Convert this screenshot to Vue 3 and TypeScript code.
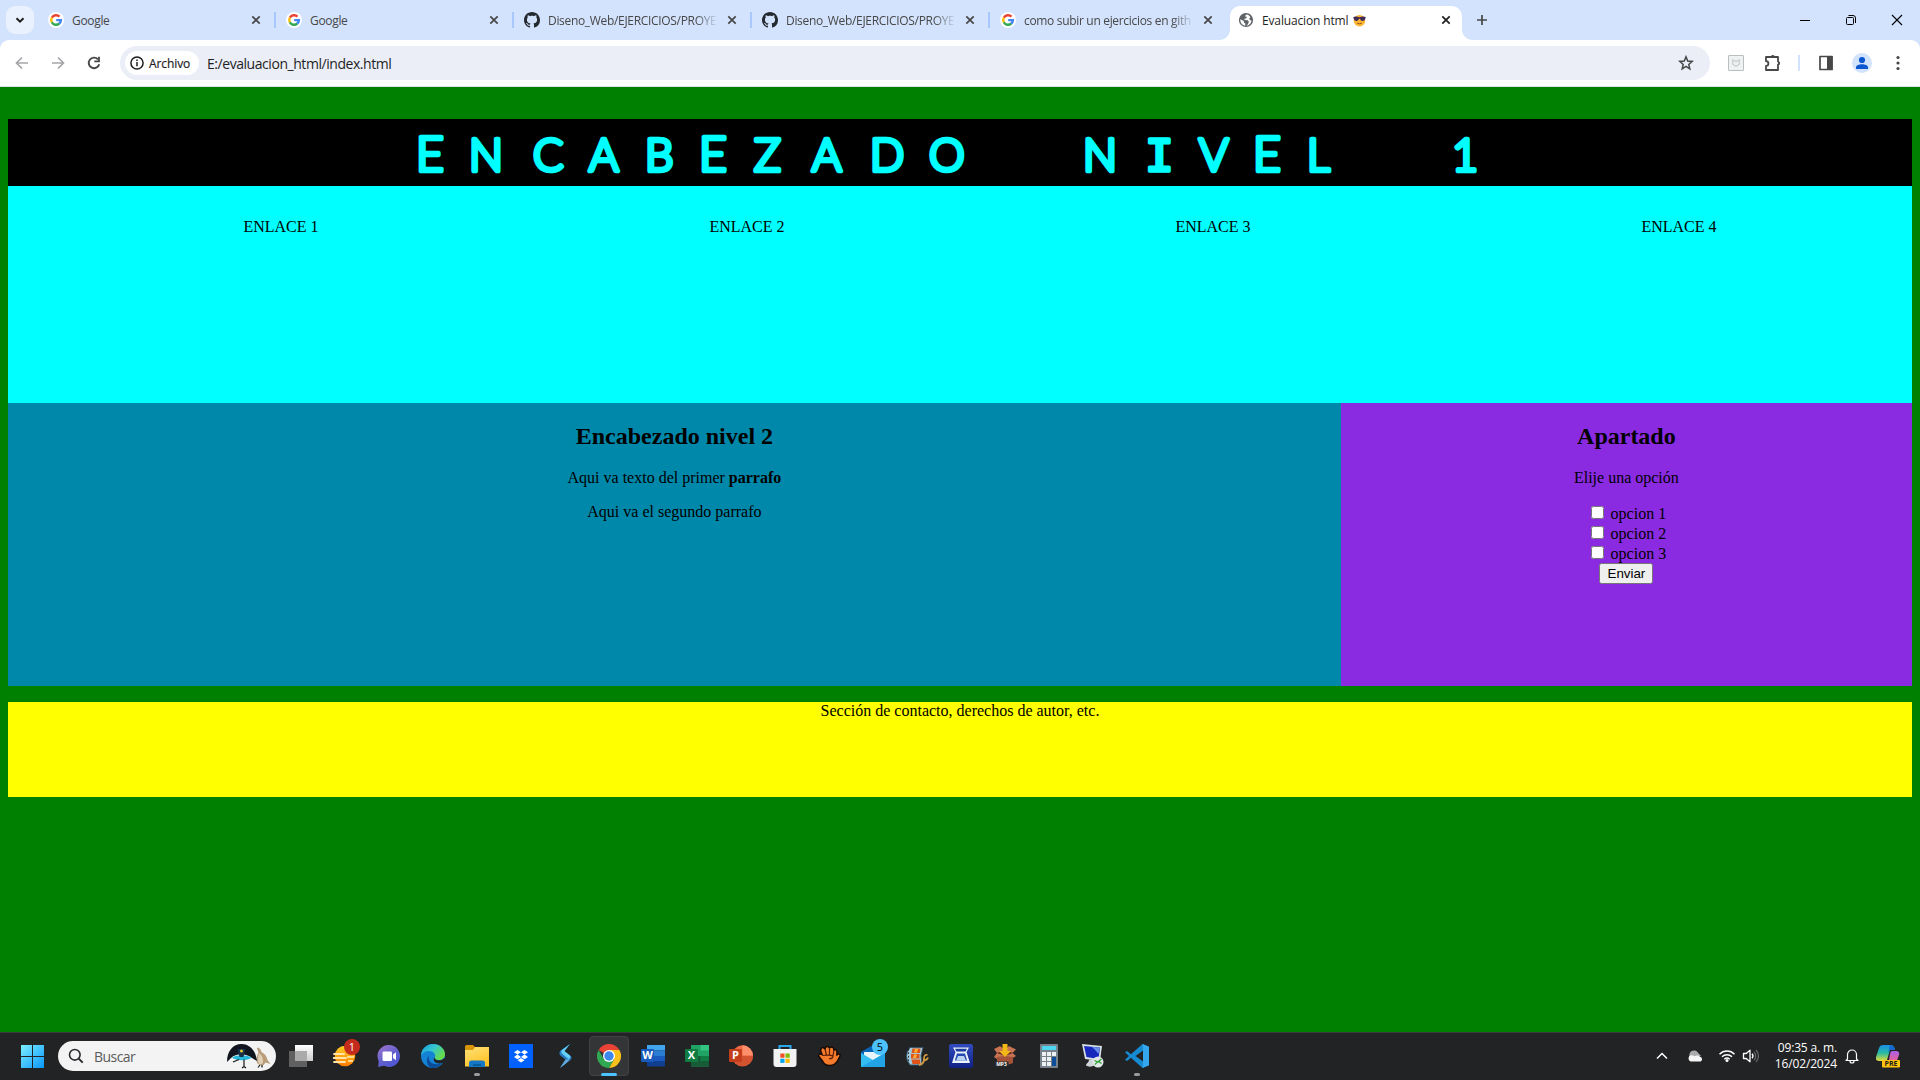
<script setup lang="ts">
interface Tab {
  title: string
  icon: 'google' | 'github' | 'globe'
  active?: boolean
}

const tabs: Tab[] = [
  { title: 'Google', icon: 'google' },
  { title: 'Google', icon: 'google' },
  { title: 'Diseno_Web/EJERCICIOS/PROYE', icon: 'github' },
  { title: 'Diseno_Web/EJERCICIOS/PROYE', icon: 'github' },
  { title: 'como subir un ejercicios en gith', icon: 'google' },
  { title: 'Evaluacion html', icon: 'globe', active: true },
]
const links: string[] = ['ENLACE 1', 'ENLACE 2', 'ENLACE 3', 'ENLACE 4']
const options: string[] = ['opcion 1', 'opcion 2', 'opcion 3']
</script>

<template>
  <div class="screen">
    <header class="strip">
      <button class="tabsearch"><svg width="12" height="12" viewBox="0 0 12 12"><path d="M2.5 4.2 6 7.7 9.5 4.2" fill="none" stroke="#1f1f1f" stroke-width="2" /></svg></button>
      <div v-for="(tab, i) in tabs" :key="i" class="tab" :class="{ active: tab.active, nosep: i > 3 }">
        <svg v-if="tab.icon === 'google'" class="fav" viewBox="0 0 16 16">
          <circle cx="8" cy="8" r="8" fill="#fff" />
          <g fill="none" stroke-width="2.4">
            <path d="M3.9 5.7A4.8 4.8 0 0 1 11.5 4.6" stroke="#ea4335" />
            <path d="M3.9 10.3a4.8 4.8 0 0 1 0-4.7" stroke="#fbbc05" />
            <path d="M11.3 11.5A4.8 4.8 0 0 1 3.8 10.2" stroke="#34a853" />
            <path d="M8.2 8.1h4.7a4.8 4.8 0 0 1-1.7 3.5" stroke="#4285f4" />
          </g>
        </svg>
        <svg v-else-if="tab.icon === 'github'" class="fav" viewBox="0 0 16 16">
          <path fill="#24292f" d="M8 0C3.58 0 0 3.58 0 8c0 3.54 2.29 6.53 5.47 7.59.4.07.55-.17.55-.38 0-.19-.01-.82-.01-1.49-2.01.37-2.53-.49-2.69-.94-.09-.23-.48-.94-.82-1.13-.28-.15-.68-.52-.01-.53.63-.01 1.08.58 1.23.82.72 1.21 1.87.87 2.33.66.07-.52.28-.87.51-1.07-1.78-.2-3.64-.89-3.64-3.95 0-.87.31-1.59.82-2.15-.08-.2-.36-1.02.08-2.12 0 0 .67-.21 2.2.82.64-.18 1.32-.27 2-.27s1.36.09 2 .27c1.53-1.04 2.2-.82 2.2-.82.44 1.1.16 1.92.08 2.12.51.56.82 1.27.82 2.15 0 3.07-1.87 3.75-3.65 3.95.29.25.54.73.54 1.48 0 1.07-.01 1.93-.01 2.2 0 .21.15.46.55.38A8.01 8.01 0 0 0 16 8c0-4.42-3.58-8-8-8z" />
        </svg>
        <svg v-else class="fav" viewBox="0 0 16 16">
          <circle cx="8" cy="8" r="7.1" fill="#5f6368" />
          <path fill="#fff" d="M8.6 2.5c-1 .5-1.6 1.2-1.4 2.1l1.6.2-.4 1.5-2 .4.3 1.3 3.1.2 1.1 1.5-1 2.6-1.6 1.5c3-.2 5-2.4 5.2-5.2l-1.7-.5-.5-1.5 1.1-1.3C11.500 3.600 10.300 2.800 8.600 2.500zM2.300 7.200l3.500 1.900.3 1.600 1.300.9-.2 2.100C4.300 13.300 2.100 10.900 2.300 7.200z" />
        </svg>
        <span class="title" :class="{ fade: tab.title.length > 20 }">{{ tab.title }}
          <svg v-if="tab.active" class="cool" viewBox="0 0 14 14">
            <circle cx="7" cy="7.200" r="6.200" fill="#fdb62f" />
            <path d="M.3 3.200Q3.500 2.200 7 3.600 10.500 2.200 13.700 3.200L13.200 5.500Q12.500 7.600 10.300 7.600 8.300 7.600 7.500 5.200H6.500Q5.700 7.600 3.700 7.600 1.500 7.600.8 5.500z" fill="#3f2a59" />
            <path d="M4.500 9.800Q7 11.400 9.500 9.800" stroke="#8a4b20" fill="none" />
          </svg>
        </span>
        <svg class="x" viewBox="0 0 10 10"><path d="M1.300 1.300 8.700 8.700M8.700 1.300 1.300 8.700" stroke="currentColor" stroke-width="1.700" /></svg>
      </div>
      <svg class="plus" viewBox="0 0 12 12"><path d="M6 1v10M1 6h10" stroke="#474747" stroke-width="1.700" /></svg>
      <div class="win">
        <svg viewBox="0 0 12 12"><path d="M1 6.500h10" stroke="#000" /></svg>
        <svg viewBox="0 0 12 12"><path d="M3.500 1.500H8a2.500 2.500 0 0 1 2.500 2.500v5M2.500 3.500h5a1 1 0 0 1 1 1v5a1 1 0 0 1-1 1h-5a1 1 0 0 1-1-1v-5a1 1 0 0 1 1-1z" fill="none" stroke="#000" /></svg>
        <svg viewBox="0 0 12 12"><path d="M1 1l10 10M11 1 1 11" stroke="#000" stroke-width="1.100" /></svg>
      </div>
    </header>

    <div class="toolwrap">
      <div class="toolbar">
        <svg class="nav" viewBox="0 0 16 16"><path d="M14 8H3M8 2.500 2.500 8 8 13.500" fill="none" stroke="#a5a6a9" stroke-width="1.700" /></svg>
        <svg class="nav" viewBox="0 0 16 16"><path d="M2 8h11M8 2.500 13.500 8 8 13.500" fill="none" stroke="#a5a6a9" stroke-width="1.700" /></svg>
        <svg class="nav" viewBox="0 0 16 16"><path d="M13.200 9.200A5.300 5.300 0 1 1 12 4.400" fill="none" stroke="#474747" stroke-width="1.900" /><path d="M13.900 1.700v5.600H8.300V5.500h3.800V1.700z" fill="#474747" /></svg>
        <div class="omni">
          <div class="chip">
            <svg viewBox="0 0 14 14"><circle cx="7" cy="7" r="6.100" fill="none" stroke="#1f1f1f" stroke-width="1.500" /><path d="M7 6v4.300M7 3.600v1.500" stroke="#1f1f1f" stroke-width="1.500" /></svg>
            <span>Archivo</span>
          </div>
          <span class="url">E:/evaluacion_html/index.html</span>
          <svg class="star" viewBox="0 0 16 16"><path d="M8 1.800 9.700 6l4.500.4-3.400 3 1 4.400L8 11.400l-3.800 2.400 1-4.400-3.400-3L6.300 6z" fill="none" stroke="#474747" stroke-width="1.500" /></svg>
        </div>
        <div class="tools">
          <svg class="t16" viewBox="0 0 16 16"><rect x=".5" y=".5" width="15" height="15" rx=".5" fill="#f0f2f2" stroke="#b9bec1" /><path d="M4.700 5v4.200L8 11.300l3.300-2.100V5L8 6.500z" fill="none" stroke="#d0d3d4" stroke-width="1.500" /></svg>
          <svg class="t18" viewBox="0 0 18 18"><path d="M2 3h12v4.500a1.700 1.700 0 0 1 0 3.200V16H2v-4a2.200 2.200 0 0 0 0-4.800z" fill="none" stroke="#474747" stroke-width="1.800" stroke-linejoin="round" /><path d="M6.800 3a2 2 0 0 1 4 0M14.500 7.400a2 2 0 0 1 0 3.800z" fill="#474747" /></svg>
          <i class="bar"></i>
          <svg class="t16" viewBox="0 0 16 16"><path d="M2 1.500h12v13H2z" fill="none" stroke="#474747" stroke-width="1.700" stroke-linejoin="round" /><path d="M9 1h5.500v14H9z" fill="#474747" /></svg>
          <svg class="t20" viewBox="0 0 20 20"><circle cx="10" cy="10" r="10" fill="#d3e3fd" /><circle cx="10" cy="7" r="3.100" fill="#0b57d0" /><path d="M4 16v-1.500c0-2.200 3-3.300 6-3.300s6 1.100 6 3.300V16z" fill="#0b57d0" /></svg>
          <svg class="t16" viewBox="0 0 16 16"><g fill="#474747"><circle cx="8" cy="2.500" r="1.600" /><circle cx="8" cy="8" r="1.600" /><circle cx="8" cy="13.500" r="1.600" /></g></svg>
        </div>
      </div>
    </div>

    <main class="page">
      <div class="banner">
        <svg width="1904" height="67" viewBox="8 119 1904 67">
          <text class="heading" y="170.500" x="416 469 533 589 645 699 754 812 870 929 1020 1083 1145 1199 1253 1307 1380 1452"><tspan class="tall">E</tspan>NCAB<tspan class="tall">E</tspan>ZADO N<tspan class="slab">I</tspan>V<tspan class="tall">E</tspan>L 1</text>
        </svg>
      </div>
      <ul class="links"><li v-for="link in links" :key="link">{{ link }}</li></ul>
      <div class="columns">
        <section class="main">
          <h2>Encabezado nivel 2</h2>
          <p>Aqui va texto del primer <b>parrafo</b></p>
          <p>Aqui va el segundo parrafo</p>
        </section>
        <aside class="side">
          <h2>Apartado</h2>
          <p>Elije una opción</p>
          <form @submit.prevent>
            <div v-for="option in options" :key="option" class="option"><input type="checkbox"> {{ option }}</div>
            <button class="send">Enviar</button>
          </form>
        </aside>
      </div>
      <footer>Sección de contacto, derechos de autor, etc.</footer>
    </main>

    <div class="taskbar">
      <svg class="start" viewBox="0 0 23 23">
        <defs><linearGradient id="wg" gradientUnits="userSpaceOnUse" x1="0" y1="0" x2="23" y2="23"><stop stop-color="#7df0ff" /><stop offset="1" stop-color="#0a96ff" /></linearGradient></defs>
        <path d="M0 0h11v11H0zM12 0h11v11H12zM0 12h11v11H0zM12 12h11v11H12z" fill="url(#wg)" />
      </svg>
      <div class="search">
        <svg class="lens" viewBox="0 0 16 16"><circle cx="6.800" cy="6.800" r="5.300" fill="none" stroke="#26282b" stroke-width="1.600" /><path d="M10.700 10.700 14.700 14.700" stroke="#26282b" stroke-width="1.900" /></svg>
        <span>Buscar</span>
        <svg class="birds" viewBox="0 0 46 26">
          <path d="M31 5.500Q31.500 4 33 5q2 1.500 2.500 4 5 2.500 6 8l3 4-5-1.500Q38 23 34 22q-4-1-3.500-6 .3-4 2-6.500z" fill="#b99c79" /><path d="M33 10q-2 7 0 11 4 1 4-3 0-5-4-8z" fill="#e1cfb5" />
          <path d="M1 19C1 8 7 1 15.500 1S30 8 31 18l-5-3C20 10 10 10 5 15z" fill="#10151f" />
          <path d="M6 14.500c5-3 14-3 19.500 0-3 3.500-16 3.500-19.500 0z" fill="#25b7dc" /><path d="M11.500 6h8l-2 8h-4z" fill="#17324c" /><circle cx="15.500" cy="8" r="1.500" fill="#e8c72d" />
          <path d="M18 16.500v7.500m-2 1 2-1.500 2 1.500M13 16.500l-6 2.500M34 22l-2 2.500M36 22v2.500" fill="none" stroke="#171717" stroke-width="1.200" />
        </svg>
      </div>
      <div class="apps">
        <div class="app"><svg viewBox="0 0 24 24"><defs><linearGradient id="tv" x2="0" y2="1"><stop stop-color="#fff" /><stop offset="1" stop-color="#ccc" /></linearGradient></defs><path d="M6 1h18v16H6z" fill="url(#tv)" /><path d="M0 7h18v16H0z" fill="#606060" /><path d="M6 7h12v10H6z" fill="#aaa" /></svg></div>
        <div class="app">
          <svg viewBox="0 0 24 24"><defs><linearGradient id="sn" x2="0" y2="1"><stop stop-color="#ffcf25" /><stop offset="1" stop-color="#ff7b00" /></linearGradient></defs><circle cx="12" cy="12" r="10.300" fill="url(#sn)" /><path d="M1 10h10M0 14h13M1 18h11" stroke="#ffe3a8" stroke-width="1.800" stroke-linecap="round" /><path d="M14 13h7M15 17h5" stroke="#fff0b5" stroke-width="1.300" /></svg>
          <span class="badge red">1</span>
        </div>
        <div class="app"><svg viewBox="0 0 24 24"><defs><linearGradient id="ch" x1="0" x2=".7" y2="1"><stop stop-color="#a477ce" /><stop offset=".6" stop-color="#6260cd" /><stop offset="1" stop-color="#4e56d4" /></linearGradient></defs><path d="M12 1a11 11 0 1 1-5 20.800L1.200 23l.5-6A11 11 0 0 1 12 1z" fill="url(#ch)" /><rect x="5.500" y="7.500" width="9.500" height="9.500" rx="1.300" fill="#fff" /><path d="M16 10.500l3-2.300v8L16 14z" fill="#fff" /></svg></div>
        <div class="app"><svg viewBox="0 0 24 24"><defs><linearGradient id="eg" x2="1" y2=".6"><stop stop-color="#169be2" /><stop offset=".5" stop-color="#35c6cf" /><stop offset="1" stop-color="#69dc45" /></linearGradient></defs><circle cx="12" cy="12" r="12" fill="#1583d5" /><path d="M0 11C1 4 6 0 12 0c7 0 12 5 12 10 0 4-3 6-6 6-4 0-5-1-4-3 1-4-3-6-6-6-4 0-6 2-8 4z" fill="url(#eg)" /><path d="M8 11c-2 6 4 12 13 8-3 4-7 5-10 5-5-1-7-8-3-13z" fill="#0b4c9a" /><path d="M13.800 13c-.6 2 1.200 3.300 4.200 3.300 2.200 0 4-.8 5.200-2.300q1.800 1 .8 3-2 2.500-6 2.500c-5 0-6.500-4-4.200-6.500z" fill="#222325" /></svg></div>
        <div class="app running"><svg viewBox="0 0 24 24"><defs><linearGradient id="fo" x2=".5" y2="1"><stop stop-color="#ffe17a" /><stop offset="1" stop-color="#ffc327" /></linearGradient></defs><path d="M0 2.500Q0 1 1.500 1H8l3 3h-1v4H0z" fill="#d99508" /><path d="M0 6h8l2-3h14v19.500H0z" fill="url(#fo)" /><path d="M4 23v-4q0-2.500 2.500-2.500h11Q20 16.500 20 19v4z" fill="#1577c5" /><path d="M8 20h8v2H8z" fill="#075c9e" /></svg></div>
        <div class="app"><svg viewBox="0 0 24 24"><path d="M0 0h24v24H0z" fill="#0061fe" /><path fill="#fff" d="m8.500 6 3.500 2.300-3.500 2.300L5 8.300zm7 0L19 8.300l-3.500 2.300L12 8.300zm-7 4.600L12 13l-3.500 2.300L5 13zm7 0L19 13l-3.500 2.300L12 13zM12 14l3.500 2.300-3.500 2.300-3.500-2.300z" /></svg></div>
        <div class="app"><svg viewBox="0 0 24 24"><path d="M17 0 7.500 6.500Q5 9.500 8 12l4.500 3.500L7 24l10.500-8q2-2.500 0-4L11 7.500z" fill="#287cc1" /><path d="M17 0 8.500 6.500q-1 2 1 3.500l6 5q3-1.500 1.500-3.500L11.500 7z" fill="#65cff9" /><path d="m7 24 5.500-8.500 4-.5q-1 3-9.500 9z" fill="#62a9d8" /></svg></div>
        <div class="app current"><svg viewBox="0 0 24 24"><path d="M12 12 1.600 6A12 12 0 0 1 22.400 6z" fill="#ea4335" /><path d="M12 12 12 6H22.400A12 12 0 0 1 12 24L17.200 15z" fill="#fbc11a" /><path d="M1.600 6 6.800 15 12 18 17.200 15 12 24A12 12 0 0 1 1.600 6z" fill="#30a852" /><circle cx="12" cy="12" r="6" fill="#fff" /><circle cx="12" cy="12" r="4.700" fill="#3f86ed" /></svg></div>
        <div class="app"><svg viewBox="0 0 24 24"><path d="M6 1h18v5.500H6z" fill="#41a5ee" /><path d="M6 6.500h18V12H6z" fill="#2b7cd3" /><path d="M6 12h18v5H6z" fill="#185abd" /><path d="M6 17h18v5.500H6z" fill="#103f91" /><rect y="5" width="13" height="13" rx="1" fill="#185abd" /><text x="6.500" y="15.200" class="glyph">W</text></svg></div>
        <div class="app"><svg viewBox="0 0 24 24"><path d="M6 1h18v21.500H6z" fill="#21a366" /><path d="M15.500 1H24v5.500h-8.500z" fill="#33c481" /><path d="M6 12h18v10.500H6z" fill="#185c37" /><path d="M15.500 12H24v5h-8.500z" fill="#107c41" /><rect y="5" width="13" height="13" rx="1" fill="#107c41" /><text x="6.500" y="15.200" class="glyph">X</text></svg></div>
        <div class="app"><svg viewBox="0 0 24 24"><circle cx="13.500" cy="11.800" r="10.500" fill="#ed6c47" /><path d="M13.500 1.300A10.500 10.500 0 0 1 24 11.800H13.500z" fill="#ff8f6b" /><path d="M3 11.800h21a10.500 10.500 0 0 1-21 0z" fill="#d35230" /><rect y="5" width="13" height="13" rx="1" fill="#c43e1c" /><text x="6.500" y="15.200" class="glyph">P</text></svg></div>
        <div class="app"><svg viewBox="0 0 24 24"><path d="M6.500 6V2h11v4" fill="none" stroke="#29a9eb" stroke-width="2" /><path d="M.5 5h23v15q0 3-3 3h-17q-3 0-3-3z" fill="#f3f3f3" /><path d="M7.300 9.500h4.200v4.200H7.300z" fill="#f25022" /><path d="M12.500 9.500h4.200v4.200h-4.200z" fill="#7fba00" /><path d="M7.300 14.700h4.200v4.200H7.300z" fill="#00a4ef" /><path d="M12.500 14.700h4.200v4.200h-4.200z" fill="#ffb900" /></svg></div>
        <div class="app"><svg viewBox="0 0 24 24"><path d="M5 10.500 3.500 6Q4.500 2.500 7 4l1 1Q8.500 2 11 2.500L12.500 4Q14.500 2 16.500 4l.5 2Q20 5 20 8l-.3 3.500Q21 9 23 10.500 23.500 12 21.500 15 19 21.500 12.500 21.500 7.500 21.500 5.500 17L1.500 12Q2 9 5 10.500z" fill="#f47a2c" stroke="#180b05" stroke-width="1.500" /><path d="M8 5l1.500 6M12.500 4.500V11M17 6l-1 5.500M6 11.500q6-1 10 .5 0 3-4 2.500" fill="none" stroke="#5b1e08" stroke-width="1.200" /></svg></div>
        <div class="app">
          <svg viewBox="0 0 24 24"><path d="M0 8 12 1l12 7v15H0z" fill="#0864b6" /><path d="M3 8h18v8H3z" fill="#e9f3fa" /><path d="m0 9 12 7 12-7v14H0z" fill="#33bdf2" /><path d="M0 23 24 9v14z" fill="#22a3e6" /></svg>
          <span class="badge blue">5</span>
        </div>
        <div class="app"><svg viewBox="0 0 24 24"><path d="M5 3.500h13l-2 8 1 9.500H5Q-2 12 5 3.500z" fill="#a6c8d8" stroke="#37576a" stroke-width="1" /><path d="M7.500 4.500h8L15 9H6.500zM6 10h8.500v4.500H6zM6.500 15.500h8.500l.5 4.500h-8z" fill="#df5317" /><path d="M10 5h3l-1 3.500H9zM9 10.500h3l-1 3.500H8z" fill="#ffad35" /><path d="M22.500 11q-3.500-1-3.500 4 0 5-5 6M18.500 16q3 1 4.500-2.500" fill="none" stroke="#d29a41" stroke-width="1.800" /><path d="M3.500 5v15" stroke="#182b36" stroke-dasharray="1.500 2" /></svg></div>
        <div class="app"><svg viewBox="0 0 24 24"><defs><linearGradient id="sc" x2="0" y2="1"><stop stop-color="#314cc1" /><stop offset="1" stop-color="#102083" /></linearGradient></defs><rect width="24" height="24" rx="2.500" fill="url(#sc)" /><path d="M4 3.500h16L17.500 8l3.500 11H3L6.500 8z" fill="#eaf2fb" /><path d="M6 4.800h12L16.500 7.500h-9z" fill="#1b399e" /><path d="m8 9.500-2.200 7h12.400L16 9.500z" fill="#2446ae" /><path d="m9 12-2 4.500h10L15 12z" fill="#b9d2ef" /></svg></div>
        <div class="app"><svg viewBox="0 0 24 24"><path d="m4 9-3-4 6-3 5 4 4-4 7 3.500-3.500 3.500 3.500 3-4 2.500V19l-7 2.500L4 19v-4l-3-2z" fill="#c77354" /><path d="m4 9 8 3 8-3-8-3z" fill="#642b20" /><path d="m4 13 8-1 8 1v6l-8 2.500L4 19z" fill="#a45339" /><path d="M9.500 0h5v7H18l-6 6-6-6h3.500z" fill="#f3b817" /><rect x="1.500" y="17.500" width="14" height="5" fill="#292b2d" /><text x="8.500" y="21.800" class="mp3">MP3</text></svg></div>
        <div class="app"><svg viewBox="0 0 24 24"><rect x="3" width="18" height="24" rx="1" fill="#76818b" /><path d="M5 2h14v4H5z" fill="#4ed5ef" /><g fill="#edf1f4"><path d="M5 8h4v4H5zM10 8h4v4h-4zM15 8h4v4h-4zM5 13h4v4H5zM10 13h4v4h-4zM5 18h4v4H5zM10 18h4v4h-4z" /></g><path d="M15 13h4v9h-4z" fill="#0b4d98" /></svg></div>
        <div class="app"><svg viewBox="0 0 24 24"><path d="M1 0 21 2 19 17 4 15z" fill="#d8dee2" /><path d="m3 2 16 1.500L17.500 15 5.500 13z" fill="#1728bd" /><path d="m11 3 8 .5L17.500 10q-3-4-6.500-7z" fill="#668de6" /><path d="m8 15.500 6 .5v5q-5 3-9 .5c0-2.500 3-2.500 3-6z" fill="#d0d5d8" /><circle cx="17" cy="18" r="5.500" fill="#e2e6e8" /><path d="m13.500 16.500 3 1.500-2.500 2.500M20.500 15l-3 2.500 3 2" fill="none" stroke="#28a12c" stroke-width="1.300" /></svg></div>
        <div class="app running"><svg viewBox="0 0 24 24"><path d="M17.500 0 24 2.800v18.400L17.500 24 6 13.800 2 17 0 15.700 4 12 0 8.300 2 7l4 3.200zM18 6.500 10.500 12l7.500 5.500z" fill="#168bd2" fill-rule="evenodd" /><path d="m17.500 0 6.500 2.800v18.400L17.500 24q.5-1 .5-2V2z" fill="#35a7ee" /></svg></div>
      </div>
      <div class="tray">
        <svg class="chev" viewBox="0 0 12 12"><path d="m1 8.500 5-5 5 5" fill="none" stroke="#fff" stroke-width="1.500" /></svg>
        <svg class="cloud" viewBox="0 0 16 12"><path d="M3 7.500a4.500 4.500 0 0 1 8-4.800L14 6z" fill="#aaa" /><path d="M3.500 11.500a3.400 3.400 0 0 1 0-6.200q2-.6 4 1l2-.8q2.200-.5 3.500 1.200a2.500 2.500 0 0 1 .5 4.800z" fill="#f5f5f5" /></svg>
        <svg class="wifi" viewBox="0 0 18 14"><g fill="none" stroke="#fff" stroke-width="1.400"><path d="M1.500 5.200a10.500 10.500 0 0 1 15 0M4 7.800a7 7 0 0 1 10 0M6.300 10.200a4 4 0 0 1 5.400 0" /></g><circle cx="9" cy="11.600" r="1.500" fill="#fff" /></svg>
        <svg class="vol" viewBox="0 0 18 14"><path d="M1.500 4.500h2.700L8 1.200v11.600L4.200 9.500H1.500z" fill="none" stroke="#fff" stroke-width="1.300" stroke-linejoin="round" /><path d="M10 4.700a3.500 3.500 0 0 1 0 4.600" fill="none" stroke="#fff" stroke-width="1.300" /><path d="M12 2.800a6 6 0 0 1 0 8.400M14 1a8.500 8.500 0 0 1 0 12" fill="none" stroke="#686868" stroke-width="1.200" /></svg>
        <div class="clock"><span>09:35 a. m.</span><span>16/02/2024</span></div>
        <svg class="bell" viewBox="0 0 14 16"><path d="M2.500 11V6.500a4.500 4.500 0 0 1 9 0V11l1.500 1.500H1zM5 13a2 2 0 0 0 4 0" fill="none" stroke="#fff" stroke-width="1.200" stroke-linejoin="round" /></svg>
        <svg class="copilot" viewBox="0 0 24 24">
          <defs><linearGradient id="c1" x2="0" y2="1"><stop stop-color="#198ee9" /><stop offset=".5" stop-color="#28baa4" /><stop offset="1" stop-color="#e8dc35" /></linearGradient><linearGradient id="c2" x2="0" y2="1"><stop stop-color="#a762e9" /><stop offset=".6" stop-color="#e75f9d" /><stop offset="1" stop-color="#ff9860" /></linearGradient></defs>
          <path d="M7 1h8q3 0 4 5h-5l-3 10q-1 1-3 1H3q-4 0-3-4L3 4q1-3 4-3z" fill="url(#c1)" /><path d="M14 1q4 0 5 5h-4q-2 0-3 3z" fill="#1768ce" /><path d="M16 7h4q4 0 3 4l-3 8q-1 3-4 3H9q3-1 4-6l1-6q.500-3 2-3z" fill="url(#c2)" />
          <rect x="6" y="16" width="18" height="7.500" rx="1" fill="#ffc20e" /><text x="15" y="22.300" class="pre">PRE</text>
        </svg>
      </div>
    </div>
  </div>
</template>

<style>
body { margin: 0; overflow: hidden; }
</style>

<style scoped>
.screen { width: 1920px; height: 1080px; display: flex; flex-direction: column; background: #008000; font-family: "Open Sans", "Noto Sans", sans-serif; overflow: hidden; }
.screen svg { display: block; flex: none; }
.strip { height: 40px; flex: none; background: #d3e3fd; display: flex; align-items: center; }
.tabsearch { width: 28px; height: 28px; margin: 0 4px 0 6px; padding: 0; border: 0; border-radius: 9px; background: #e9f1fe; display: flex; align-items: center; justify-content: center; flex: none; }
.tab { width: 238px; height: 40px; flex: none; box-sizing: border-box; padding: 0 13px 0 10px; display: flex; align-items: center; position: relative; color: #474747; font-size: 12px; }
.tab:not(.nosep)::after { content: ""; position: absolute; right: 0; top: 12px; width: 2px; height: 16px; background: #a8c7fa; }
.fav { width: 16px; height: 16px; }
.title { margin-left: 8px; width: 171px; height: 20px; line-height: 21px; white-space: nowrap; letter-spacing: -0.32px; }
.fade { -webkit-mask-image: linear-gradient(90deg, #000 148px, transparent 170px); mask-image: linear-gradient(90deg, #000 148px, transparent 170px); }
.x { width: 10px; height: 10px; margin-left: auto; margin-right: 2px; }
.active { width: 232px; height: 34px; align-self: flex-end; margin-left: 2px; background: #fff; color: #1f1f1f; border-radius: 10px 10px 0 0; padding: 0 9px 6px 8px; }
.active .title { letter-spacing: -.15px; }
.active::before, .active::after { content: ""; position: absolute; bottom: 0; width: 10px; height: 10px; }
.active::before { left: -10px; background: radial-gradient(circle at 0 0, transparent 9.5px, #fff 10px); }
.active::after { right: -10px; background: radial-gradient(circle at 100% 0, transparent 9.5px, #fff 10px); }
.screen .cool { display: inline-block; width: 13px; height: 13px; vertical-align: -2px; margin-left: 2px; }
.plus { width: 12px; height: 12px; margin-left: 14px; }
.win { margin-left: auto; display: flex; gap: 34px; padding-right: 17px; }
.win svg { width: 12px; height: 12px; }
.toolwrap { background: #d3e3fd; flex: none; }
.toolbar { height: 46px; background: #fff; border-bottom: 1px solid #dfe1e5; border-radius: 9px 9px 0 0; display: flex; align-items: center; padding-left: 14px; }
.nav { width: 16px; height: 16px; margin-right: 20px; }
.omni { margin-left: -2px; width: 1590px; height: 34px; border-radius: 17px; background: #ebeef7; display: flex; align-items: center; box-sizing: border-box; padding: 0 16px 0 5px; margin-right: 18px; }
.chip { width: 74px; height: 24px; border-radius: 12px; background: #fff; display: flex; align-items: center; gap: 5px; padding-left: 5px; box-sizing: border-box; font-size: 12px; color: #1f1f1f; letter-spacing: -.1px; -webkit-text-stroke: .2px #1f1f1f; }
.chip svg { width: 14px; height: 14px; }
.url { margin-left: 8px; font-size: 14px; color: #1f1f1f; letter-spacing: -0.45px; }
.star { width: 16px; height: 16px; margin-left: auto; }
.tools { display: flex; align-items: center; }
.t16 { width: 16px; height: 16px; }
.t18 { width: 18px; height: 18px; margin-left: 20px; }
.bar { width: 2px; height: 16px; background: #d3e3fd; margin: 0 18px 0 16px; }
.t20 { width: 20px; height: 20px; margin: 0 18px; }

.page { flex: 1; padding: 32px 8px 0; font: 16px "Liberation Serif", serif; color: #000; text-align: center; }
.banner { height: 67px; background: #000; }
.heading { font-family: Lato, sans-serif; font-weight: 300; font-size: 45px; fill: #0ff; stroke: #0ff; stroke-width: 4.6px; stroke-linejoin: round; stroke-linecap: round; }
.tall { font-size: 48px; }
.slab { font-family: "Liberation Mono", monospace; font-weight: 400; font-size: 48px; stroke-width: 3.6px; }
.links { margin: 0; height: 217px; box-sizing: border-box; padding: 32px 0 0 40px; background: #0ff; list-style: none; display: flex; }
.links li { flex: 1; line-height: 18px; }
.columns { display: flex; height: 283px; }
.main { width: 70%; background: #08a; overflow: hidden; }
.side { width: 30%; background: #8a2be2; overflow: hidden; }
.page h2 { font-size: 24px; margin: 20px 0 19px; line-height: 27px; }
.page p { margin: 16px 0; line-height: 18px; }
.option { height: 20px; line-height: 20px; }
.send { font: 13.333px "Liberation Sans", sans-serif; display: block; width: 54px; height: 21px; margin: 0 auto; padding: 0; }
footer { margin-top: 16px; height: 95px; background: #ff0; line-height: 18px; }

.taskbar { height: 48px; box-sizing: border-box; flex: none; background: #222325; border-top: 1px solid #393c3a; display: flex; align-items: center; padding: 0 0 1px 21px; }
.start { width: 23px; height: 23px; }
.search { margin-left: 14px; width: 218px; height: 30px; border-radius: 15px; background: #f3f3f3; display: flex; align-items: center; box-sizing: border-box; padding: 0 4px 0 10px; color: #5b5b5b; font-size: 14px; }
.lens { width: 16px; height: 16px; }
.search span { margin-left: 10px; letter-spacing: -.55px; }
.birds { width: 46px; height: 26px; margin-left: auto; }
.apps { margin-left: 3px; display: flex; }
.app { width: 44px; height: 44px; display: flex; align-items: center; justify-content: center; position: relative; }
.app > svg { width: 24px; height: 24px; }
.current::before { content: ""; position: absolute; left: 2px; top: 2px; width: 38px; height: 38px; border: 1px solid #414244; border-radius: 4px; background: #343536; }
.current > svg { position: relative; }
.current::after { content: ""; position: absolute; left: 14px; bottom: 2px; width: 16px; height: 3px; border-radius: 2px; background: #4cc2ff; }
.running::after { content: ""; position: absolute; left: 19px; bottom: 2px; width: 6px; height: 3px; border-radius: 2px; background: #9b9b9b; }
.badge { position: absolute; left: 21px; top: 5px; width: 16px; height: 16px; line-height: 16px; border-radius: 50%; font-size: 11px; text-align: center; }
.red { background: #c42b1c; color: #fff; }
.blue { background: #4cc2ff; color: #000; }
.glyph { font: 700 11px "Open Sans", sans-serif; fill: #fff; text-anchor: middle; }
.mp3 { font: 700 5px "Open Sans", sans-serif; fill: #fff; text-anchor: middle; }
.pre { font: 700 7px "Open Sans", sans-serif; fill: #1b1b1b; text-anchor: middle; }
.tray { margin-left: auto; display: flex; align-items: center; padding-right: 20px; }
.chev { width: 12px; height: 12px; }
.cloud { width: 16px; height: 12px; margin-left: 19px; }
.wifi { width: 18px; height: 14px; margin-left: 15px; }
.vol { width: 18px; height: 14px; margin-left: 6px; }
.clock { width: 77px; margin-right: 8px; display: flex; flex-direction: column; align-items: flex-end; color: #fff; font-size: 12px; line-height: 16px; letter-spacing: -.15px; white-space: nowrap; }
.bell { width: 14px; height: 16px; }
.copilot { width: 24px; height: 24px; margin-left: 17px; }
</style>
